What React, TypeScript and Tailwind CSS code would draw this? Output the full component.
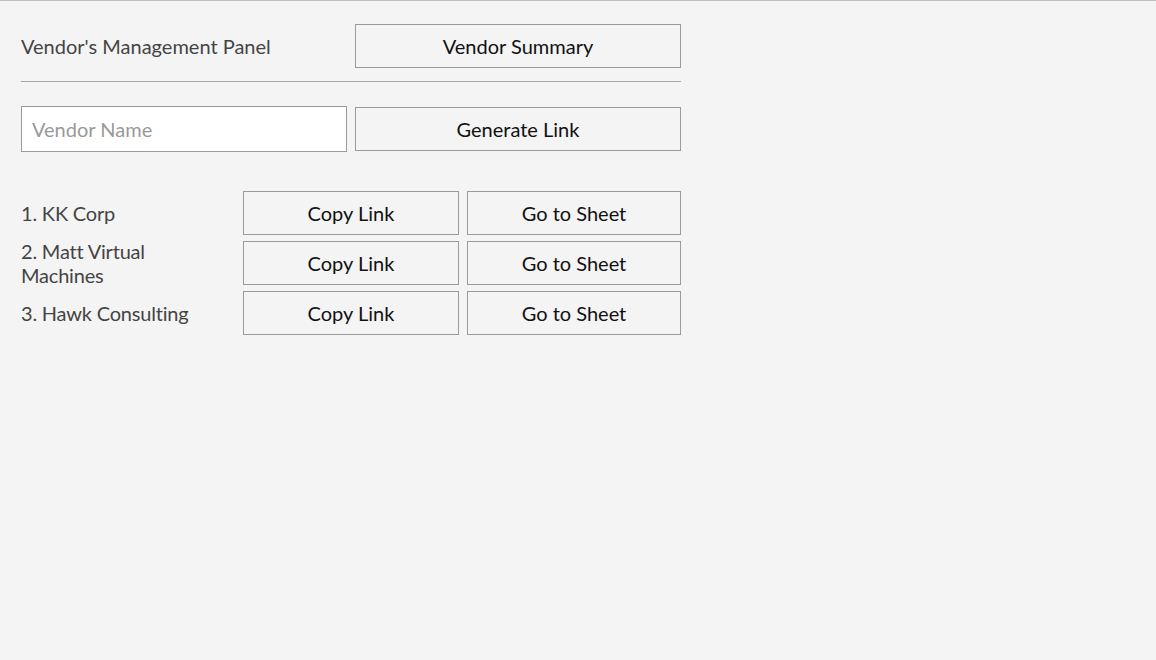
const vendors = ['KK Corp', 'Matt Virtual Machines', 'Hawk Consulting'];

const btn =
  'h-[44px] border border-[#9a9a9a] bg-[#f4f4f4] text-[20px] text-[#111] flex items-center justify-center';

export default function App() {
  return (
    <div className="min-h-[660px] w-full bg-[#f4f4f4] border-t border-[#bdbdbd] font-['Lato','Open_Sans',sans-serif]">
      <div className="w-[660px] ml-[21px] pt-[23px]">
        <div className="flex items-center gap-2">
          <div className="w-[326px] text-[20px] text-[#444]">Vendor's Management Panel</div>
          <button className={`${btn} w-[326px]`}>Vendor Summary</button>
        </div>

        <div className="mt-[13px] h-px bg-[#a8a8a8]" />

        <div className="mt-[24px] flex items-center gap-2">
          <input
            placeholder="Vendor Name"
            className="w-[326px] h-[46px] border border-[#9a9a9a] bg-white px-[10px] text-[20px] text-[#333] placeholder:text-[#999] outline-none"
          />
          <button className={`${btn} w-[326px]`}>Generate Link</button>
        </div>

        <div className="mt-[39px] flex flex-col gap-[6px]">
          {vendors.map((v, i) => (
            <div key={v} className="h-[44px] flex items-center gap-2">
              <div className="w-[214px] pr-[24px] text-[20px] leading-[24px] tracking-[-0.2px] text-[#444]">
                {`${i + 1}. ${v}`}
              </div>
              <button className={`${btn} w-[216px]`}>Copy Link</button>
              <button className={`${btn} w-[214px]`}>Go to Sheet</button>
            </div>
          ))}
        </div>
      </div>
    </div>
  );
}
